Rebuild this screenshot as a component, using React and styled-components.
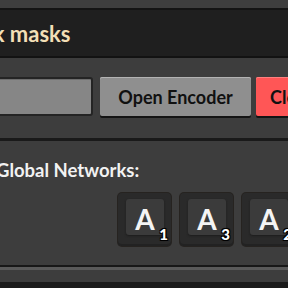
import React from 'react';
import styled, { createGlobalStyle } from 'styled-components';

const GlobalStyle = createGlobalStyle`
    html, body {
        margin: 0;
        padding: 0;
        background: #3d3d3d;
        overflow: hidden;
    }
    * {
        box-sizing: border-box;
    }
`;

const Frame = styled.div`
    width: 288px;
    height: 288px;
    display: flex;
    flex-direction: column;
    overflow: hidden;
    font-family: Lato, 'Open Sans', sans-serif;
`;

const TopStrip = styled.div`
    height: 10px;
    background: #3e3e3e;
    border-bottom: 2px solid #141414;
`;

const TitleBar = styled.div`
    height: 48px;
    background: #1f1f1f;
    border-bottom: 2px solid #121212;
    display: flex;
    align-items: center;
    overflow: hidden;
`;

const Title = styled.h2`
    margin: 0 0 0 -82px;
    font-size: 22px;
    font-weight: 700;
    color: #f3dfb6;
    white-space: nowrap;
`;

const Section = styled.div`
    background: #3d3d3d;
    display: flex;
    flex-direction: column;
    padding: ${({ $pad }) => $pad};
    height: ${({ $h }) => $h}px;
    border-bottom: ${({ $line }) => ($line ? '3px solid #1a1a1a' : 'none')};
`;

const ButtonRow = styled.div`
    display: flex;
    height: 39px;
    margin-left: -8px;
`;

const TextField = styled.div`
    width: 101px;
    flex: none;
    margin-right: 7px;
    background: #868686;
    border: 2px solid #242424;
    border-radius: 3px;
    box-shadow: inset 0 1px 0 #6e6e6e;
`;

const Button = styled.button`
    flex: none;
    width: ${({ $w }) => $w}px;
    height: 39px;
    margin-right: 5px;
    border: none;
    border-radius: 2px;
    background: ${({ $red }) => ($red ? '#ff5656' : '#8f8f8f')};
    box-shadow: inset 0 1px 0 ${({ $red }) => ($red ? '#ff8080' : '#b3b3b3')},
        0 2px 0 #141414;
    font-family: Lato, 'Open Sans', sans-serif;
    font-size: 18px;
    font-weight: 700;
    color: #111;
    padding: 0;
    text-align: ${({ $red }) => ($red ? 'left' : 'center')};
    padding-left: ${({ $red }) => ($red ? '14px' : '0')};
    white-space: nowrap;
    overflow: hidden;
`;

const Label = styled.div`
    font-size: 18.5px;
    font-weight: 700;
    color: #f2f2f2;
    margin-left: -4px;
    white-space: nowrap;
`;

const SlotRow = styled.div`
    display: flex;
    gap: 9px;
    margin-left: 118px;
    margin-top: 12px;
`;

const Slot = styled.div`
    position: relative;
    flex: none;
    width: 53px;
    height: 53px;
    background: #2a2a2a;
    border-radius: 4px;
    box-shadow: 0 0 0 1px #262320, inset 0 -2px 0 #222;
    padding: 6px 7px 11px 8px;
`;

const SlotFace = styled.div`
    width: 100%;
    height: 100%;
    background: #3b3b3b;
    border-radius: 3px;
    box-shadow: 0 1px 2px #1c1c1c;
    display: flex;
    align-items: center;
    justify-content: center;
    font-size: 28px;
    font-weight: 700;
    color: #f4f4f4;
    padding-top: 3px;
`;

const Sub = styled.span`
    position: absolute;
    right: 3px;
    bottom: 4px;
    font-size: 15px;
    font-weight: 900;
    color: #fff;
    line-height: 1;
    text-shadow: 0 0 2px #000, 1px 1px 0 #000, -1px -1px 0 #000, 1px -1px 0 #000, -1px 1px 0 #000;
`;

const Footer = styled.div`
    flex: 1;
    background: #1b1b1b;
    display: flex;
    flex-direction: column;
`;

const FooterLine = styled.div`
    height: ${({ $h }) => $h}px;
    background: ${({ $c }) => $c};
`;

const networks = [1, 3, 2];

export default function App() {
    return (
        <>
            <GlobalStyle />
            <Frame>
                <TopStrip />
                <TitleBar>
                    <Title>Network masks</Title>
                </TitleBar>
                <Section $pad="19px 0 0 0" $h={83} $line>
                    <ButtonRow>
                        <TextField />
                        <Button $w={151}>Open Encoder</Button>
                        <Button $red $w={60}>Close</Button>
                    </ButtonRow>
                </Section>
                <Section $pad="18px 0 0 0" $h={124}>
                    <Label>Global Networks:</Label>
                    <SlotRow>
                        {networks.map((n) => (
                            <Slot key={n}>
                                <SlotFace>A</SlotFace>
                                <Sub>{n}</Sub>
                            </Slot>
                        ))}
                    </SlotRow>
                </Section>
                <Footer>
                    <FooterLine $h={2} $c="#181818" />
                    <FooterLine $h={3} $c="#5a5a5a" />
                    <FooterLine $h={12} $c="#3d3d3d" />
                </Footer>
            </Frame>
        </>
    );
}
